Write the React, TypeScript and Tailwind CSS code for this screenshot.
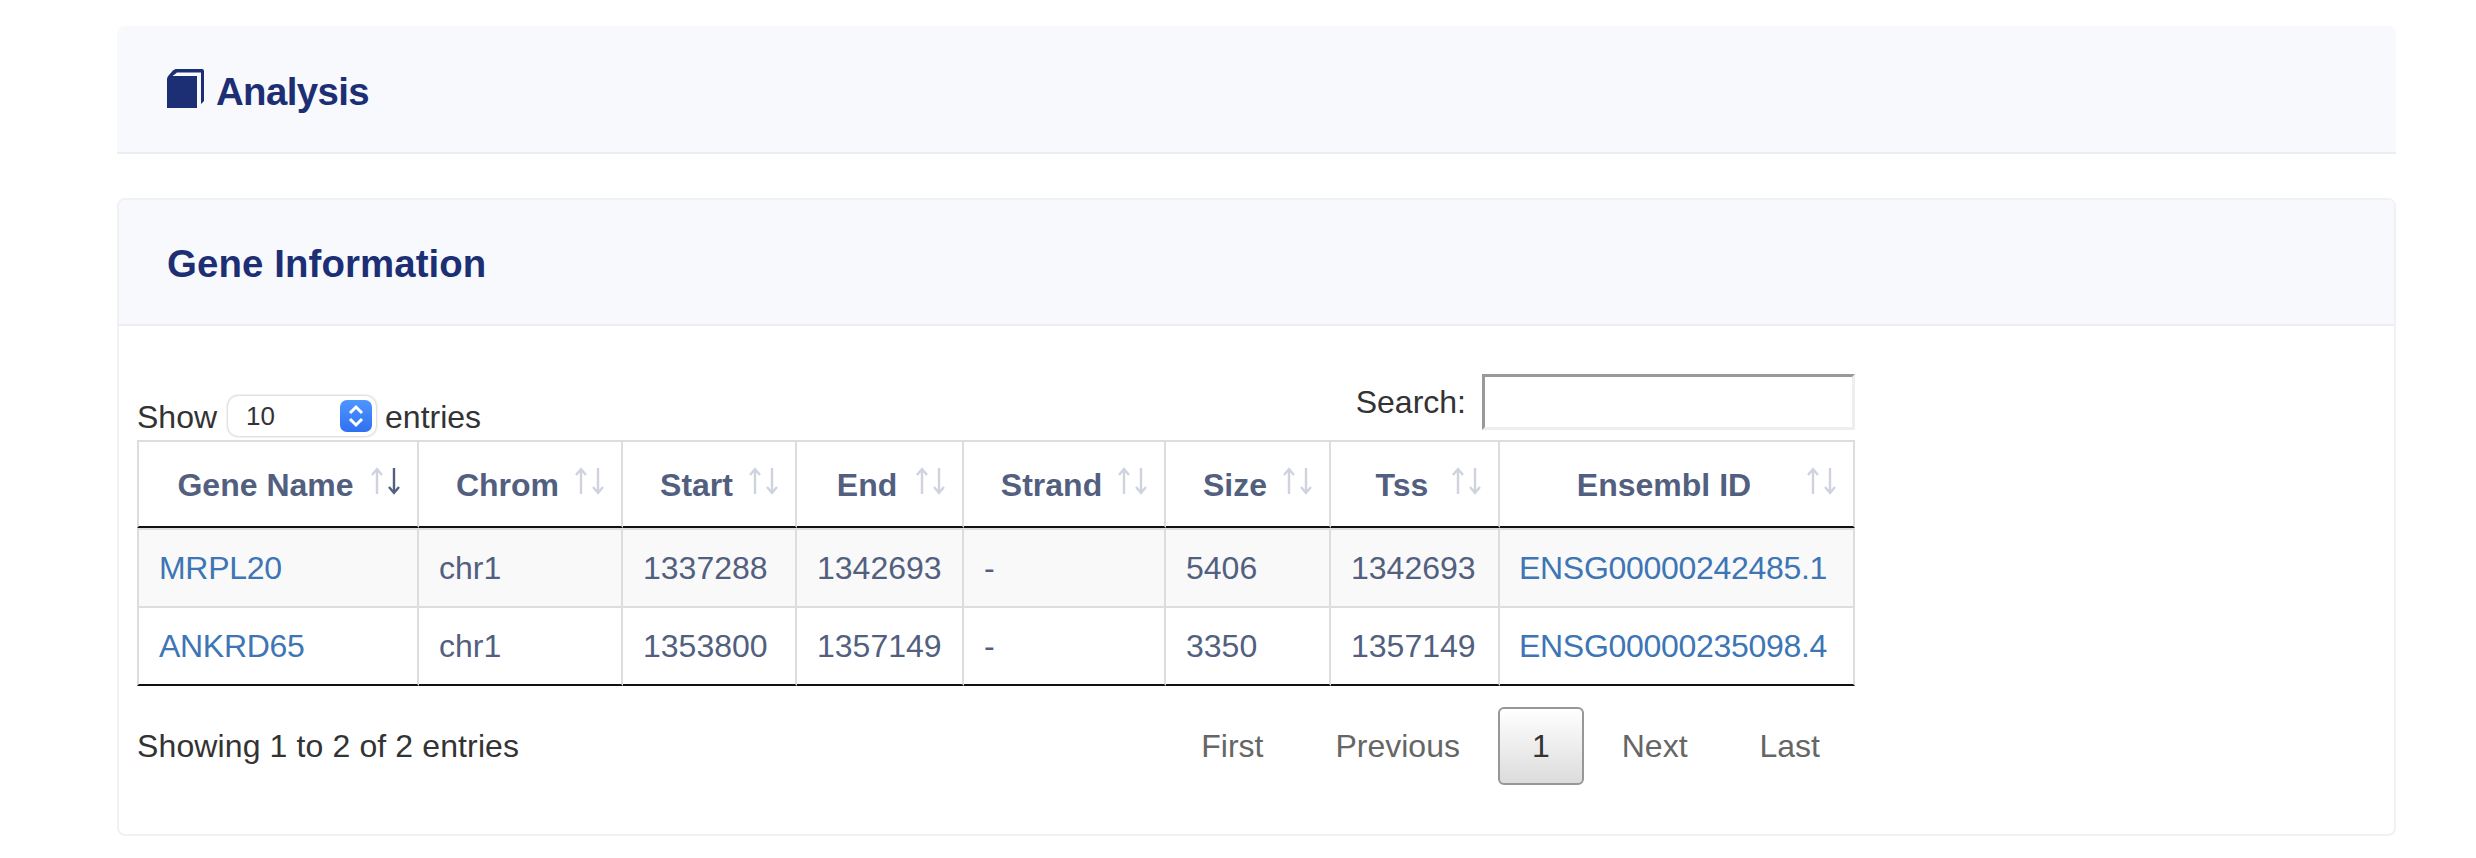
import React from 'react';

const headers = ['Gene Name', 'Chrom', 'Start', 'End', 'Strand', 'Size', 'Tss', 'Ensembl ID'];

const rows = [
    ['MRPL20', 'chr1', '1337288', '1342693', '-', '5406', '1342693', 'ENSG00000242485.1'],
    ['ANKRD65', 'chr1', '1353800', '1357149', '-', '3350', '1357149', 'ENSG00000235098.4'],
];

const SortIcon: React.FC<{ active?: boolean }> = ({ active }) => (
    <svg width="29" height="28" viewBox="0 0 29 28" fill="none" strokeWidth="2.4" className="absolute right-[17px] top-[25px]">
        <path d="M6 27V2M1 8l5-6 5 6" stroke="#cfd3de" />
        <path d="M23 1v25M18 20l5 6 5-6" stroke={active ? '#525f7f' : '#cfd3de'} />
    </svg>
);

const BookIcon = () => (
    <svg width="37" height="39" viewBox="0 0 37 39" fill="#1c2f74" className="mr-[12px] mb-[6px] shrink-0">
        <path d="M0 10Q0 8 2 6L6 1.500Q7.500 0 9 0H35Q37 0 37 2V32L34 35V3.500H10L5.500 7H30V39H0Z" />
    </svg>
);

const PageLink: React.FC<{ label: string; current?: boolean }> = ({ label, current }) => (
    <a
        className={
            current
                ? 'ml-[4px] h-[78px] px-[32px] flex items-center border-2 border-[#979797] rounded-[6px] bg-gradient-to-b from-white to-[#dcdcdc] text-[#333]'
                : 'ml-[4px] h-[78px] px-[32px] flex items-center border-2 border-transparent text-[#666]'
        }
        href="#"
    >
        {label}
    </a>
);

const App: React.FC = () => {
    return (
        <div className="w-[2476px] h-[858px] bg-white overflow-hidden pt-[26px] pl-[117px] font-['Liberation_Sans',Arial,sans-serif] text-[32px] leading-[45px] text-[#333]">
            {/* Analysis header */}
            <div className="w-[2279px] h-[128px] flex items-center pl-[50px] pt-[5px] bg-[#f8f9fd] border-b-2 border-[#ebedf2] rounded-t-[8px]">
                <BookIcon />
                <h1 className="text-[38.400px] font-bold tracking-[-0.600px] text-[#1c2f74]">Analysis</h1>
            </div>

            {/* Gene information card */}
            <div className="mt-[44px] w-[2279px] h-[638px] border-2 border-[#f1f1f4] rounded-[8px]">
                <div className="h-[126px] flex items-center pl-[48px] pt-[2px] bg-[#f8f9fd] border-b-2 border-[#ebedf2] rounded-t-[6px]">
                    <h2 className="text-[38.400px] font-bold tracking-[0.100px] text-[#1c2f74]">Gene Information</h2>
                </div>

                <div className="pl-[18px] w-[1736px]">
                    <div className="flex justify-between items-end h-[114px] pb-[10px]">
                        <div className="flex items-center h-[40px] mb-[-6px]">
                            <span className="pt-[3px]">Show</span>
                            <div className="ml-[11px] w-[148px] h-[40px] flex items-center justify-between pl-[18px] pr-[4px] bg-white rounded-[10px] shadow-[0_0_3px_rgba(0,0,0,0.35)] text-[26px]">
                                <span>10</span>
                                <span className="w-[32px] h-[32px] rounded-[7px] bg-gradient-to-b from-[#4f96ff] to-[#2f70f0] flex items-center justify-center">
                                    <svg width="18" height="26" viewBox="0 0 18 26" fill="none" stroke="white" strokeWidth="3">
                                        <path d="M3 10l6-6 6 6M3 16l6 6 6-6" />
                                    </svg>
                                </span>
                            </div>
                            <span className="ml-[9px] pt-[3px]">entries</span>
                        </div>
                        <div className="flex items-center">
                            <label className="mr-[16px]">Search:</label>
                            <input className="w-[373px] h-[56px] border-[3px] border-t-[#999] border-l-[#999] border-r-[#eee] border-b-[#eee] bg-white" />
                        </div>
                    </div>

                    <table className="w-[1718px] table-fixed border-separate border-spacing-0 text-[#525f7f]">
                        <colgroup>
                            <col className="w-[282px]" />
                            <col className="w-[204px]" />
                            <col className="w-[174px]" />
                            <col className="w-[167px]" />
                            <col className="w-[202px]" />
                            <col className="w-[165px]" />
                            <col className="w-[169px]" />
                            <col className="w-[355px]" />
                        </colgroup>
                        <thead>
                            <tr>
                                {headers.map((h, i) => (
                                    <th
                                        key={h}
                                        className={`relative h-[88px] pt-[2px] pr-[25px] text-center font-bold border-t-2 border-r-2 border-t-[#ddd] border-r-[#ddd] border-b-2 border-b-[#111] ${i === 0 ? 'border-l-2 border-l-[#ddd]' : ''}`}
                                    >
                                        {h}
                                        <SortIcon active={i === 0} />
                                    </th>
                                ))}
                            </tr>
                        </thead>
                        <tbody>
                            {rows.map((row, r) => (
                                <tr key={row[0]} className={r === 0 ? 'bg-[#f9f9f9]' : 'bg-white'}>
                                    {row.map((cell, i) => (
                                        <td
                                            key={i}
                                            className={`font-normal whitespace-nowrap border-t-2 border-t-[#ddd] border-r-2 border-r-[#ddd] ${i === 7 ? 'px-[19px]' : 'px-[20px]'} ${r === 0 ? 'h-[78px]' : 'h-[80px] border-b-2 border-b-[#111]'} ${i === 0 ? 'border-l-2 border-l-[#ddd]' : ''}`}
                                        >
                                            {i === 0 || i === 7 ? (
                                                <a className="text-[#3d75b5] tracking-[-0.300px]" href="#">{cell}</a>
                                            ) : (
                                                cell
                                            )}
                                        </td>
                                    ))}
                                </tr>
                            ))}
                        </tbody>
                    </table>

                    <div className="mt-[21px] w-[1717px] flex items-center justify-between">
                        <div className="tracking-[0.120px]">Showing 1 to 2 of 2 entries</div>
                        <div className="flex items-center">
                            <PageLink label="First" />
                            <PageLink label="Previous" />
                            <PageLink label="1" current />
                            <PageLink label="Next" />
                            <PageLink label="Last" />
                        </div>
                    </div>
                </div>
            </div>
        </div>
    );
};

export default App;
